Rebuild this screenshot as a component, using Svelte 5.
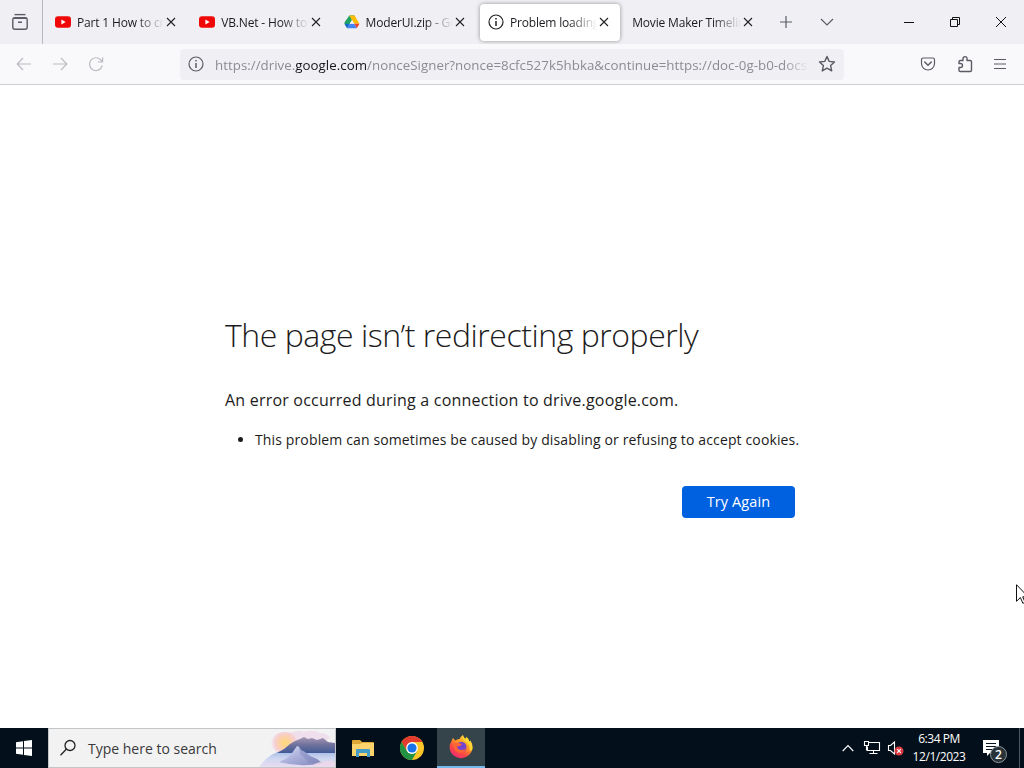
<script lang="ts">
  type Tab = { title: string; icon: "youtube" | "drive" | "info" | null; active?: boolean };

  const tabs: Tab[] = [
    { title: "Part 1 How to create", icon: "youtube" },
    { title: "VB.Net - How to make", icon: "youtube" },
    { title: "ModerUI.zip - Google", icon: "drive" },
    { title: "Problem loading page", icon: "info", active: true },
    { title: "Movie Maker Timeline", icon: null },
  ];
</script>

{#snippet info()}
  <svg class="icon" width="16" height="16" viewBox="0 0 16 16">
    <circle cx="8" cy="8" r="7" />
    <path d="M8 7v5" stroke-width="1.5" />
    <path d="M8 4v1.5" stroke-width="1.5" />
  </svg>
{/snippet}

<div class="screen">
  <header class="tabbar">
    <div class="view">
      <svg class="icon" width="18" height="18" viewBox="0 0 18 18">
        <path d="M3.5 1.600h11" stroke-width="1.4" />
        <rect x="1.8" y="4.6" width="14.4" height="11.6" rx="2.2" stroke-width="1.4" />
        <path d="M2 5.400h14M7 9.300h4" stroke-width="1.4" />
      </svg>
    </div>
    <nav class="tabs">
      {#each tabs as tab}
        <div class="tab" class:active={tab.active}>
          {#if tab.icon === "youtube"}
            <svg width="16" height="16" viewBox="0 0 16 16">
              <rect y="2.3" width="16" height="11.4" rx="3" fill="#f00808" />
              <path d="M6.400 5.600v4.800L10.600 8z" fill="#fff" />
            </svg>
          {:else if tab.icon === "drive"}
            <svg width="16" height="16" viewBox="0 0 16 16">
              <path d="M5.300 1.500h5.300L8 6z" fill="#188038" />
              <path d="M5.300 1.500 8 6 3.200 14.200.6 9.900q-.5-.9 0-1.700z" fill="#1ea362" />
              <path d="M5.300 1.500h5.300l4.800 8.200H10.100z" fill="#fbbc04" />
              <path d="M.5 9.700h5.200L3.200 14.300z" fill="#1967d2" />
              <path d="M5.700 9.700h4.600l2.500 4.600H3.200z" fill="#4285f4" />
              <path d="M10.300 9.700h5.200l-2.700 4.600z" fill="#ea4335" />
              <path d="M8 6 5.700 9.700h4.600z" fill="#f0f0f4" />
            </svg>
          {:else if tab.icon === "info"}
            {@render info()}
          {/if}
          <span class="title" class:wide={!tab.icon}>{tab.title}</span>
          <svg class="close" width="10" height="10" viewBox="0 0 10 10">
            <path d="m1 1 8 8M9 1 1 9" />
          </svg>
        </div>
      {/each}
    </nav>
    <svg class="icon plus" width="14" height="14" viewBox="0 0 14 14"><path d="M7 1v12M1 7h12" /></svg>
    <svg class="icon chevron" width="14" height="14" viewBox="0 0 14 14"><path d="m1 4 6 6 6-6" /></svg>
    <div class="window-controls">
      <svg width="12" height="12" viewBox="0 0 12 12"><path d="M1 6.500h10" /></svg>
      <svg width="12" height="12" viewBox="0 0 12 12">
        <path d="M1.500 3.500h7v7h-7zM3.500 3.500v-2h7v7h-2" />
      </svg>
      <svg width="12" height="12" viewBox="0 0 12 12"><path d="m1 1 10 10M11 1 1 11" /></svg>
    </div>
  </header>

  <div class="toolbar">
    <div class="nav-buttons">
      <svg class="icon" width="16" height="16" viewBox="0 0 16 16"><path d="M15 8H1.500M7 2 1.200 8 7 14" /></svg>
      <svg class="icon" width="16" height="16" viewBox="0 0 16 16"><path d="M1 8h13.500M9 2l5.800 6L9 14" /></svg>
      <svg class="icon" width="16" height="16" viewBox="0 0 16 16">
        <path d="M14.200 9.500A6.400 6.400 0 1 1 12.800 4L14.500 6M14.600 1.200V6H9.800" />
      </svg>
    </div>
    <div class="urlbar">
      {@render info()}
      <div class="url">https://drive.<b>google.com</b>/nonceSigner?nonce=8cfc527k5hbka&amp;continue=https://doc-0g-b0-docs.googleusercontent.com</div>
      <svg class="icon" width="18" height="18" viewBox="0 0 18 18">
        <path d="m9 1.500 2.200 4.900 5.300.6-3.900 3.600 1.100 5.300L9 13.200l-4.700 2.700 1.100-5.300L1.500 7l5.300-.6z" stroke-linejoin="round" stroke-width="1.4" />
      </svg>
    </div>
    <div class="tools">
      <svg class="icon" width="16" height="16" viewBox="0 0 16 16">
        <path d="M3.200 2h9.600q1.700 0 1.700 1.700V7.500a6.500 6.500 0 0 1-13 0V3.700Q1.500 2 3.200 2z" />
        <path d="m4.700 6 3.300 3.200L11.300 6" stroke-width="1.5" stroke-linecap="round" />
      </svg>
      <svg class="icon" width="16" height="18" viewBox="0 0 16 18">
        <path d="M6 5.500V3.600a2 2 0 0 1 4 0v1.900h3.200q1.300 0 1.300 1.300v8.400q0 1.300-1.300 1.300H3.300Q2 16.500 2 15.200V12.500h1.500a2 2 0 0 0 0-4H2V6.800q0-1.300 1.300-1.300z" stroke-linejoin="round" stroke-width="1.4" />
      </svg>
      <svg class="icon" width="14" height="14" viewBox="0 0 14 14"><path d="M1 2.500h12M1 7h12M1 11.500h12" /></svg>
    </div>
  </div>

  <main class="page">
    <div class="error">
      <h1>The page isn’t redirecting properly</h1>
      <p>An error occurred during a connection to drive.google.com.</p>
      <ul>
        <li>This problem can sometimes be caused by disabling or refusing to accept cookies.</li>
      </ul>
      <button>Try Again</button>
    </div>
  </main>

  <footer class="taskbar">
    <div class="start">
      <svg width="16" height="16" viewBox="0 0 16 16" fill="#fff">
        <path d="M0 2.200 7 1.200v6.300H0zM8 1l8-1v7.500H8zM0 8.500h7v6.300l-7-1zM8 8.500h8V16l-8-1.100z" />
      </svg>
    </div>
    <div class="search">
      <svg width="18" height="18" viewBox="0 0 18 18" fill="none" stroke="#222" stroke-width="1.3">
        <circle cx="11" cy="6.500" r="5" />
        <path d="M7.500 10 1.500 16.200" />
      </svg>
      <span>Type here to search</span>
      <svg class="scene" width="80" height="38" viewBox="0 0 80 38">
        <defs>
          <radialGradient id="sun" cx="30" cy="14" r="15" gradientUnits="userSpaceOnUse">
            <stop offset="0" stop-color="#ffd873" />
            <stop offset=".4" stop-color="#fbd0a8" />
            <stop offset=".7" stop-color="#f5d0d6" />
            <stop offset="1" stop-color="#f2e4ee" stop-opacity="0" />
          </radialGradient>
          <linearGradient id="hills" x1="0" y1="0" x2="0" y2="1">
            <stop offset="0" stop-color="#a698b6" />
            <stop offset=".5" stop-color="#6f719c" />
            <stop offset="1" stop-color="#405a96" />
          </linearGradient>
          <linearGradient id="lake" x1="0" y1="0" x2="0" y2="1">
            <stop offset="0" stop-color="#a3b9e4" />
            <stop offset=".45" stop-color="#ccd6f0" />
            <stop offset="1" stop-color="#e9dcf0" />
          </linearGradient>
          <linearGradient id="rock" x1="0" y1="0" x2="1" y2="1">
            <stop offset="0" stop-color="#dadff6" />
            <stop offset=".5" stop-color="#a9afd9" />
            <stop offset="1" stop-color="#8288bb" />
          </linearGradient>
        </defs>
        <path d="M34 5q8-5 15-2 8-3 16 1 8 0 10 5l-8 5H28z" fill="#efdfec" />
        <ellipse cx="30" cy="14" rx="15" ry="11" fill="url(#sun)" />
        <path d="M4 38Q14 24 27 22h53v16z" fill="url(#lake)" />
        <path d="M22 24l7-4 6-5 5-3 5-2 4-2 4 2 4-1 5 2 6-2 5 4 7 1v10z" fill="url(#hills)" />
        <path d="m24 33 8-4 5-5 5-7q2 0 4 4l4 2 5 4 7 3 5 4q-20 5-43-1z" fill="url(#rock)" />
        <path d="m44 17 1 8 5 4 4 5h13l-5-4-7-3-5-4-4-2z" fill="#7f85ba" opacity=".45" />
        <path d="M58 36q8-5 22-4v6H58z" fill="#f1d8e8" opacity=".7" />
      </svg>
    </div>
    <div class="app first">
      <svg width="22" height="20" viewBox="0 0 22 20">
        <path d="M0 3q0-1 1-1h7l2 2h11q1 0 1 1v13H0z" fill="#dda936" />
        <path d="M0 6h8l2-1h12v13H0z" fill="#fbd36c" />
        <path d="M4 12q0-1 1-1h12q1 0 1 1v7h-3v-4H7v4H4z" fill="#459cc9" />
      </svg>
    </div>
    <div class="app">
      <svg width="24" height="24" viewBox="0 0 24 24">
        <circle cx="12" cy="12" r="12" fill="#fcc629" />
        <path d="M1.600 6A12 12 0 0 1 22.400 6H12L6.800 15z" fill="#e33b2e" />
        <path d="M1.600 6 6.800 15 12 18l5.200-3L12 24A12 12 0 0 1 1.600 6z" fill="#229342" />
        <circle cx="12" cy="12" r="5.9" fill="#fff" />
        <circle cx="12" cy="12" r="4.6" fill="#1a73e8" />
      </svg>
    </div>
    <div class="app current">
      <svg width="24" height="24" viewBox="0 0 24 24">
        <defs>
          <linearGradient id="fox" x1=".85" y1="0" x2=".2" y2="1">
            <stop offset="0" stop-color="#ffe63b" />
            <stop offset=".4" stop-color="#ff9a24" />
            <stop offset=".7" stop-color="#ff4746" />
            <stop offset="1" stop-color="#e52877" />
          </linearGradient>
        </defs>
        <path d="M2.500 6 4 2.800 6 5.500q2-1.500 4.500-1.500Q12 1 14 0q0 2.500 2.500 4l1-2q2.500 2 3 5l.7-1.500Q24 9 23.500 13A11.500 11 0 0 1 .7 14Q.3 9 2.500 6z" fill="url(#fox)" />
        <circle cx="12.300" cy="12" r="5.200" fill="#7544ce" />
        <path d="M4.500 9q2-2 5-1l3.500 1-2 2-3 .5q1 4 5 3.500 3-.5 3.500-2-1 5-5.500 5Q4.500 17 4.500 9z" fill="#ff6535" />
        <path d="M14 0q0 2.500 2.500 4l1-2q2.500 2 3 5l.7-1.500q3 4.500 2 9.500l-2.700 1q1-5-2-8Q13 5 14 0z" fill="#ffd735" />
      </svg>
    </div>
    <div class="tray">
      <svg class="up" width="12" height="8" viewBox="0 0 12 8"><path d="m.7 7 5.300-5.500L11.300 7" /></svg>
      <svg class="net" width="18" height="16" viewBox="0 0 18 16">
        <path d="M5.500 2.500h11v8h-12V6.500M10.500 10.500v3M6.500 13.500h8M1.500 1.500h4v4h-4zM3.500 5.500v5" />
      </svg>
      <svg class="sound" width="17" height="16" viewBox="0 0 17 16">
        <path d="M1.500 5.500h2L7.500 2v12L3.500 10.500h-2z" />
        <circle cx="12" cy="11" r="4.5" fill="#dc3b43" stroke="none" />
        <path d="m10.200 9.200 3.600 3.600M13.800 9.200l-3.600 3.600" />
      </svg>
      <div class="clock">
        <span class="time">6:34 PM</span>
        <span class="date">12/1/2023</span>
      </div>
      <div class="notify">
        <svg width="18" height="18" viewBox="0 0 18 18">
          <path d="M0 0h16v13H7l-3 3v-3H0z" fill="#fff" stroke="none" />
          <path d="M3 3.500h10M3 6.500h10M3 9.500h7" stroke="#07131e" />
        </svg>
        <span class="count">2</span>
      </div>
    </div>
  </footer>

  <svg class="cursor" width="12" height="20" viewBox="0 0 12 20">
    <path d="M.5.700v16.600l3.900-3.700 2.500 5.700 2.200-1-2.400-5.500H12z" fill="#fff" stroke="#111" />
  </svg>
</div>

<style>
  :global(body) {
    overflow: hidden;
  }
  .screen {
    position: relative;
    display: flex;
    flex-direction: column;
    width: 1024px;
    height: 768px;
    overflow: hidden;
    background: #fff;
    color: #1c1b20;
    font-family: "Open Sans", "Noto Sans", sans-serif;
  }
  svg {
    display: block;
    flex: none;
  }
  .icon {
    fill: none;
    stroke: #5b5b66;
    stroke-width: 1.2;
  }
  .tabbar {
    display: flex;
    align-items: center;
    height: 44px;
    background: #f0f0f4;
  }
  .view {
    display: flex;
    align-items: center;
    width: 31px;
    height: 44px;
    padding-left: 11px;
    border-right: 1px solid #b8b8c0;
  }
  .tabs {
    display: flex;
    gap: 4px;
    padding-left: 4px;
  }
  .tab {
    box-sizing: border-box;
    display: flex;
    align-items: center;
    width: 140.3px;
    height: 37px;
    padding: 0 10px 0 8px;
    border-radius: 4px;
    font-size: 12px;
    letter-spacing: -0.17px;
  }
  .tab.active {
    background: #fff;
    box-shadow: 0 0 4px rgba(0, 0, 0, 0.4);
  }
  .tab.active .icon {
    stroke: #222;
  }
  .title {
    flex: 1;
    min-width: 0;
    margin: 1px 2px 0 6px;
    overflow: hidden;
    white-space: nowrap;
    mask-image: linear-gradient(to left, transparent, #000 28px);
  }
  .title.wide {
    margin-left: 0;
  }
  .close {
    margin-right: 1px;
    fill: none;
    stroke: #222;
    stroke-width: 1.1;
  }
  .plus {
    margin-left: 15px;
  }
  .chevron {
    margin-left: 27px;
  }
  .window-controls {
    display: flex;
    gap: 34px;
    margin: 0 17px 0 auto;
    fill: none;
    stroke: #111;
  }
  .toolbar {
    display: flex;
    align-items: center;
    height: 40px;
    border-bottom: 1px solid #ccccd1;
    background: #f9f9fb;
  }
  .nav-buttons {
    display: flex;
    gap: 20px;
    width: 164px;
    padding-left: 16px;
  }
  .nav-buttons .icon {
    stroke: #bcbcc2;
  }
  .urlbar {
    box-sizing: border-box;
    display: flex;
    align-items: center;
    width: 664px;
    height: 31px;
    padding: 0 8px;
    border-radius: 4px;
    background: #f0f0f4;
  }
  .url {
    flex: 1;
    margin: 2px 9px 0 11px;
    overflow: hidden;
    color: #8b8b93;
    font-size: 13.3px;
    letter-spacing: 0.03px;
    white-space: nowrap;
    mask-image: linear-gradient(to left, transparent, #000 26px);
  }
  .url b {
    color: #15141a;
    font-weight: 400;
  }
  .tools {
    display: flex;
    align-items: center;
    gap: 20.5px;
    margin: 0 17px 0 auto;
  }
  .page {
    flex: 1;
    padding: 228px 0 0 225px;
  }
  .error {
    display: flex;
    flex-direction: column;
    width: 590px;
  }
  h1 {
    margin: 0;
    font-size: 32px;
    font-weight: 300;
    line-height: 44px;
    letter-spacing: -0.46px;
    white-space: nowrap;
  }
  p {
    margin: 31px 0 0;
    font-size: 16px;
    line-height: 24px;
    letter-spacing: 0.21px;
    white-space: nowrap;
  }
  ul {
    margin: 17px 0 0;
    padding-left: 30px;
    font-size: 14px;
    line-height: 22px;
    letter-spacing: 0.135px;
    white-space: nowrap;
  }
  button {
    width: 113px;
    height: 32px;
    margin: 35px 0 0 457px;
    padding: 0;
    border: 0;
    border-radius: 4px;
    background: #0061e0;
    color: #fff;
    font: 500 14.5px/32px "Open Sans", "Noto Sans", sans-serif;
    letter-spacing: 0.1px;
  }
  .taskbar {
    display: flex;
    height: 40px;
    background: #03101b;
  }
  .start {
    display: flex;
    align-items: center;
    justify-content: center;
    width: 48px;
  }
  .search {
    box-sizing: border-box;
    display: flex;
    align-items: center;
    width: 288px;
    padding-left: 10px;
    border: 1px solid #c3c6c9;
    background: #f2f2f3;
    color: #3a3a3a;
    font-size: 14px;
  }
  .search span {
    margin: 1px 0 0 11px;
    white-space: nowrap;
  }
  .scene {
    margin-left: auto;
  }
  .app {
    box-sizing: border-box;
    display: flex;
    align-items: center;
    justify-content: center;
    width: 48px;
    margin-left: 1px;
  }
  .app.first {
    margin-left: 3px;
  }
  .app.current {
    border-bottom: 2px solid #76b9ed;
    background: #35434b;
  }
  .tray {
    display: flex;
    align-items: center;
    margin-left: auto;
    fill: none;
    stroke: #fff;
    stroke-width: 1.1;
    color: #fff;
  }
  .net {
    margin-left: 9px;
  }
  .sound {
    margin-left: 6px;
  }
  .clock {
    display: flex;
    flex-direction: column;
    align-items: center;
    width: 52px;
    margin: 0 18px 0 9px;
    font-size: 12px;
    line-height: 18px;
    white-space: nowrap;
  }
  .time,
  .date {
    letter-spacing: -0.45px;
  }
  .notify {
    position: relative;
    width: 36px;
    margin-right: 4px;
    border-right: 1px solid #4c5964;
    padding: 12px 0 10px;
  }
  .count {
    position: absolute;
    left: 7px;
    top: 18px;
    width: 15px;
    height: 15px;
    border: 1px solid #8c969b;
    border-radius: 50%;
    background: #283238;
    font-size: 12px;
    font-weight: 600;
    line-height: 15px;
    text-align: center;
  }
  .cursor {
    position: absolute;
    left: 1016px;
    top: 584px;
  }
</style>
